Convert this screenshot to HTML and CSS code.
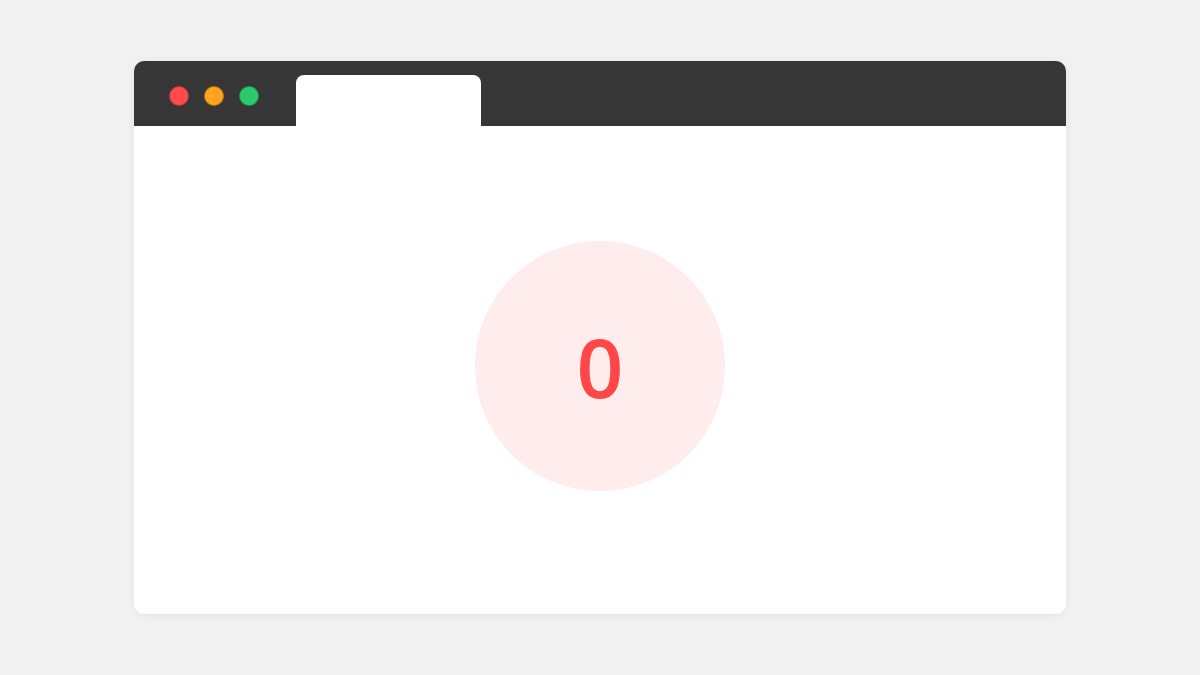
FILE: index.html
```html
<!DOCTYPE html>
<html>
<head>
<meta charset="utf-8">
<link rel="stylesheet" href="styles.css">
</head>
<body>
<div class="stage">
  <div class="window">
    <div class="titlebar">
      <div class="dots">
        <span class="dot red"></span>
        <span class="dot orange"></span>
        <span class="dot green"></span>
      </div>
      <div class="tab"></div>
    </div>
    <div class="content">
      <div class="badge">0</div>
    </div>
  </div>
</div>
</body>
</html>
```
FILE: styles.css
```css
html, body {
  margin: 0;
  padding: 0;
  background: #f2f2f2;
}
.stage {
  width: 1200px;
  height: 675px;
  display: flex;
  align-items: center;
  justify-content: center;
}
.window {
  width: 932px;
  height: 553px;
  background: #ffffff;
  border-radius: 10px;
  overflow: hidden;
  box-shadow: 0 1px 8px rgba(0, 0, 0, 0.08);
  display: flex;
  flex-direction: column;
}
.titlebar {
  height: 65px;
  background: #363636;
  display: flex;
  align-items: flex-end;
  padding-left: 35px;
  flex-shrink: 0;
}
.dots {
  display: flex;
  gap: 15px;
  align-self: flex-start;
  margin-top: 25px;
}
.dot {
  width: 18px;
  height: 18px;
  border-radius: 50%;
  border: 1px solid rgba(0, 0, 0, 0.25);
}
.red { background: #ff4b4b; }
.orange { background: #ffa41c; }
.green { background: #2acb6c; }
.tab {
  width: 185px;
  height: 51px;
  background: #ffffff;
  border-radius: 8px 8px 0 0;
  margin-left: 37px;
}
.content {
  flex: 1;
  display: flex;
  justify-content: center;
  padding-top: 115px;
}
.badge {
  width: 250px;
  height: 250px;
  border-radius: 50%;
  background: #ffecec;
  color: #ff4747;
  font-family: "Open Sans", "Noto Sans", sans-serif;
  font-weight: 600;
  font-size: 82px;
  display: flex;
  align-items: center;
  justify-content: center;
  line-height: 1;
}
```
